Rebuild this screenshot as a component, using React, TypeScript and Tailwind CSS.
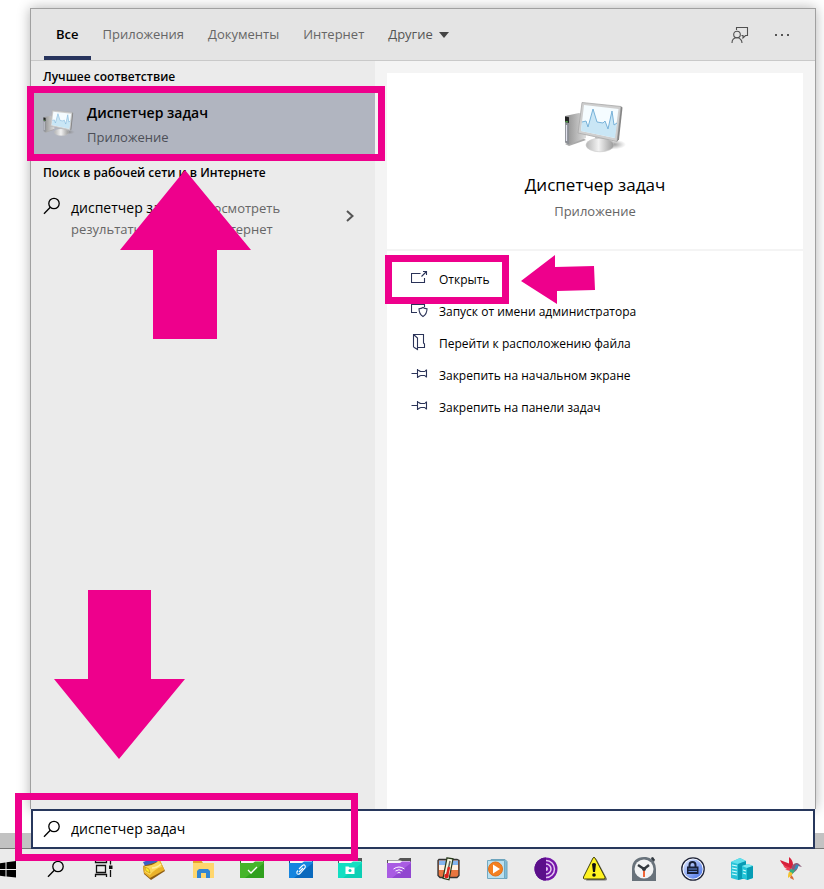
import React from 'react';

interface IconProps {
  className?: string;
}

const SearchIcon: React.FC<IconProps> = ({ className }) => (
  <svg viewBox="0 0 18 18" className={className} fill="none" stroke="currentColor" strokeWidth="1.3">
    <circle cx="11" cy="6.5" r="5.2" />
    <path d="M7.3 10.2 1 16.8" />
  </svg>
);

const FeedbackIcon = () => (
  <svg viewBox="0 0 18 18" className="size-[18px]" fill="none" stroke="#505050" strokeWidth="1.1">
    <path d="M5.500 4V1.500h11v8h-2l-2.500 2.500V9.500h-1.500" />
    <circle cx="6" cy="8.500" r="3.300" />
    <path d="M1 17c0-3 2-5.200 5-5.200s5 2.200 5 5.200" />
  </svg>
);

const MonitorIcon: React.FC<IconProps> = ({ className }) => (
  <svg viewBox="0 0 62 52" className={className} aria-hidden="true">
    <defs>
      <linearGradient id="tower" x1="0" x2="1">
        <stop offset="0" stopColor="#8b8b8b" />
        <stop offset="1" stopColor="#dedede" />
      </linearGradient>
      <linearGradient id="stand" x1="0" x2="1">
        <stop offset="0" stopColor="#b5b5b5" />
        <stop offset=".45" stopColor="#f2f2f2" />
        <stop offset="1" stopColor="#989898" />
      </linearGradient>
      <radialGradient id="shade">
        <stop offset="0" stopColor="#777" stopOpacity=".8" />
        <stop offset="1" stopColor="#999" stopOpacity="0" />
      </radialGradient>
    </defs>
    <ellipse cx="49" cy="43.500" rx="13" ry="5" fill="url(#shade)" />
    <path d="M1 43 5 45l17-6-5-3z" fill="#aaa" />
    <path d="m1 15 14-3 7 2v23L5 43.500z" fill="url(#tower)" />
    <path d="m1 15 4 1v27.500l-4-2z" fill="#8c8f95" />
    <path d="m1 15.500 4 .8V22l-4-1z" fill="#222" />
    <path d="M2.500 24v16" stroke="#e2e2ee" strokeWidth="1.200" />
    <path d="M1.500 20.500 4 21" stroke="#5dc151" strokeWidth="1.200" />
    <path d="m31 36 14 2-1 6H33z" fill="#b8b8b8" />
    <ellipse cx="36" cy="44" rx="14" ry="6.800" fill="url(#stand)" stroke="#c7c7c7" strokeWidth=".6" />
    <path d="m18 1.500 39 4-4 35-39-8.500z" fill="#cfcfcf" stroke="#a8a8a8" strokeWidth=".8" />
    <path d="m57 5.500 1.500 1L55 38.500l-2 2z" fill="#858585" />
    <path d="m20 4 34.500 4-4 29L17 30z" fill="#f5fcff" />
    <path d="m18 21 4-1 2 6 5-18 4 13 6 1 2-2 3 8 4-18 2 14 3-2-2 15-34-7z" fill="#c9e6f5" />
    <path d="m18 21 4-1 2 6 5-18 4 13 6 1 2-2 3 8 4-18 2 14 3-2" fill="none" stroke="#78b2d9" strokeWidth="1" />
  </svg>
);

const OpenIcon = () => (
  <svg viewBox="0 0 18 18" className="size-[18px]" fill="none" stroke="#2a3358" strokeWidth="1.1">
    <path d="M9.500 4.500h-9v9h13V9M10.500 7.500l5-5M12 2.500h3.500V6" />
  </svg>
);

const AdminIcon = () => (
  <svg viewBox="0 0 18 18" className="size-[18px]" fill="none" stroke="#2a3358" strokeWidth="1.1">
    <path d="M6 11.500H.5v-8h13V6" />
    <path d="M12 6.500c1.500 1 2.500 1.200 4 1.300 0 4-1 6-4 7.700-3-1.700-4-3.700-4-7.700 1.500-.1 2.500-.3 4-1.300z" />
  </svg>
);

const FileLocationIcon = () => (
  <svg viewBox="0 0 18 18" className="size-[18px]" fill="none" stroke="#2a3358" strokeWidth="1.1">
    <path d="M2.500 14V1.500h10V10l1 1v3.500H7M2.500 1.500 6.500 5v11.500L2.500 14" />
  </svg>
);

const PinIcon = () => (
  <svg viewBox="0 0 18 18" className="size-[18px]" fill="none" stroke="#2a3358" strokeWidth="1.1">
    <path d="M.5 8.500h6M6.500 4v9M6.500 5c1.500 0 2 1.500 3.500 1.500h3.500c1 0 1-1.500 2-1.500M6.500 12c1.500 0 2-1.500 3.500-1.500h3.500c1 0 1 1.500 2 1.500M15.500 4.500v8" />
  </svg>
);

const WindowsIcon = () => (
  <svg viewBox="0 0 24 24" className="size-6">
    <path d="m4 6.500 6.500-1V12H4zM11.500 5.300 21 4v8h-9.500zM4 13h6.500v6.500l-6.500-1zM11.500 13H21v7.500l-9.500-1z" />
  </svg>
);

const TaskViewIcon = () => (
  <svg viewBox="0 0 24 24" className="size-6" fill="none" stroke="#111" strokeWidth="1.3">
    <path d="M2.500 3v2.500h11V3M3.500 8.500h9v7h-9zM2.500 20v-2.500h11V20M17.500 3v4.500M17.500 13v7" />
    <path d="M16 8.500h3.500V12H16z" fill="#111" stroke="none" />
  </svg>
);

const WalletIcon = () => (
  <svg viewBox="0 0 24 24" className="size-6">
    <path d="m1 5 11-4 4 4-12 6z" fill="#3c61c4" />
    <path d="m1 9 17-5 5 10-14 9-7-6z" fill="#8d5d14" />
    <path d="M1 9c5 1 12-2 17-6l4.500 10L8 21l-6-5z" fill="#eab22a" />
    <path d="M3 9c6 0 10-2 14-5l3 6c-5 1-9 4-12 8l-5-3z" fill="#fbd75a" />
    <path d="m3 10 4 2 1 4-4-2z" fill="#ffe928" stroke="#b98b0d" strokeWidth=".6" />
    <path d="M10 11c4 0 7-2 9-4" fill="none" stroke="#fff0a5" strokeWidth="1.500" />
  </svg>
);

const ExplorerIcon = () => (
  <svg viewBox="0 0 24 24" className="size-6">
    <path d="M2 3h8l2 3h10v15H2z" fill="#e7a52b" />
    <path d="M2 6h21v15H2z" fill="#ffd66d" />
    <path d="M6 21v-7l2-2h9l2 2v7h-4v-5h-5v5z" fill="#3386d2" />
  </svg>
);

interface FolderProps {
  back: string;
  front: string;
  shade: string;
  children: React.ReactNode;
}

const FolderIcon: React.FC<FolderProps> = ({ back, front, shade, children }) => (
  <svg viewBox="0 0 24 24" className="size-6">
    <path d="M0 3h11l2-2h11v7H0z" fill={back} />
    <path d="M1 3.500h12l2 .5h8v3H1z" fill="#f7f7f7" />
    <path d="M0 6h13l2-1.500h9V21H0z" fill={front} />
    <path d="M24 6v15H5z" fill={shade} />
    {children}
  </svg>
);

const CleanerIcon = () => (
  <svg viewBox="0 0 24 24" className="size-6">
    <path d="M3 2.500h8v18H4l-2-2v-15zM13 2.500h8l2 1v15l-2 2h-8z" fill="#e8753f" stroke="#333" strokeWidth="1.300" />
    <path d="M3 3.500h7v7H3zM14 3.500h8v7h-8z" fill="#84b6ef" />
    <path d="M3 8h7v5H3zM14 8h8v5h-8z" fill="#fff0e1" />
    <path d="m11 .8 6 1-4 21-6-1.500z" fill="#f3f7df" stroke="#27391c" strokeWidth="1.200" />
    <path d="m14 4-3 14" stroke="#666" strokeWidth="1.500" />
    <path d="m13 10-2 9" stroke="#e02820" strokeWidth="2.500" />
    <circle cx="10.500" cy="19" r="2.300" fill="#d9201b" />
  </svg>
);

const PlayerIcon = () => (
  <svg viewBox="0 0 24 24" className="size-6">
    <path d="M6 2.500h14l2 2v17H7z" fill="#82bdd9" stroke="#6da4bd" />
    <path d="M2.500 3.500h17v18h-17z" fill="#b9e0f0" stroke="#72a9c2" />
    <circle cx="10.500" cy="12" r="7" fill="#f48021" stroke="#e0701a" />
    <path d="m8 7.500 7 4.500-7 4.500z" fill="#fff" />
  </svg>
);

const TorIcon = () => (
  <svg viewBox="0 0 24 24" className="size-6" fill="none">
    <circle cx="12" cy="12" r="11.500" fill="#7416a8" />
    <path d="M12 .5a11.500 11.500 0 0 0 0 23z" fill="#5b0f8a" />
    <path d="M12 3.500a8.500 8.500 0 0 1 0 17M12 7a5 5 0 0 1 0 10" stroke="#e4c7f2" strokeWidth="1.500" />
    <path d="M12 10a2 2 0 0 1 0 4z" fill="#e4c7f2" />
  </svg>
);

const WarningIcon = () => (
  <svg viewBox="0 0 24 24" className="size-6">
    <path d="M13.500 2 24 22q0 1.500-2 1.500H3z" fill="#777" />
    <path d="M10 1q1-1.500 2 0L22 20q.5 2-1 2H1.500Q0 22 .5 20z" fill="#fff321" stroke="#41400d" strokeWidth="1" />
    <path d="M9 7q2-2 4 0l-1 8h-2z" fill="#111" />
    <circle cx="11" cy="18" r="1.800" fill="#111" />
  </svg>
);

const ClockIcon = () => (
  <svg viewBox="0 0 24 24" className="size-6">
    <path d="M0 24V12C0 4 5 0 12 0c3 0 5 .5 7 2l1-2 3 3-1 2q2 3 2 7v12z" fill="#68727b" />
    <path d="m19 1 2-1 2 3-2 1z" fill="#343a40" />
    <circle cx="12" cy="12" r="9.500" fill="#f2f3f4" />
    <path d="m6 8 6 4 5-4" fill="none" stroke="#343a40" strokeWidth="2.500" />
    <path d="M12 12v8" stroke="#ef6537" strokeWidth="2" />
    <circle cx="12" cy="12" r="2" fill="#343a40" />
  </svg>
);

const LockIcon = () => (
  <svg viewBox="0 0 24 24" className="size-6">
    <defs>
      <linearGradient id="lock" x1="0" y1="0" x2="1" y2="1">
        <stop offset="0" stopColor="#dfe8ff" />
        <stop offset="1" stopColor="#426ee7" />
      </linearGradient>
    </defs>
    <circle cx="12" cy="12" r="11.200" fill="#fff" stroke="#20253a" strokeWidth="1.300" />
    <circle cx="12" cy="12" r="9.700" fill="url(#lock)" />
    <path d="M8.500 10V8a3 3 0 0 1 6 0v2" fill="none" stroke="#182039" strokeWidth="2" />
    <path d="M6 9.500h11.500V17H6z" fill="#182039" />
    <path d="M7.500 12h8.500M7.500 14.500h8.500" stroke="#6589d8" strokeWidth="1" />
  </svg>
);

const ServersIcon = () => (
  <svg viewBox="0 0 24 24" className="size-6">
    <path d="m1 5 9-4 6 3v17l-8 2-7-2z" fill="#2cc3d8" />
    <path d="m1 5 9-4 6 3-8 3z" fill="#62e0ec" />
    <path d="M8 7v16l8-2V4z" fill="#089bb4" />
    <path d="m2 8 5 1M2 11l5 1M2 14l5 1M2 17l5 1" stroke="#d7ffff" strokeWidth="1.200" />
    <path d="m12 9 6-2 5 2v12l-6 2-5-2z" fill="#24c5d8" />
    <path d="m12 9 6-2 5 2-6 2z" fill="#7be9f2" />
    <path d="m17 11 6-2v12l-6 2z" fill="#079db5" />
    <path d="m13 13 3 1M13 16l3 1" stroke="#d7ffff" strokeWidth="1.200" />
  </svg>
);

const BirdIcon = () => (
  <svg viewBox="0 0 24 24" className="size-6">
    <path d="m1 3 9 3.500L10 0c3 2 4 5 4 8l-2 5C8 11 3 8 1 3z" fill="#d81f3a" />
    <path d="m4 8 8 3-1 3c-2-1-3-1-5-1l2-1c-2-1-3-2-4-4z" fill="#ed4055" />
    <path d="M13 9c2-3 5-4 7-2l3 3-4-1c0 3-2 5-5 7l-2-2z" fill="#8a5a78" />
    <path d="M17 7.500 20 8l-2 4-3 1z" fill="#348eb9" />
    <path d="m11 12 5 1c-1 3-3 5-6 6z" fill="#35ae82" />
    <path d="M10 15c3 0 4 1 3 3l-4 3c0-2 0-4 1-6z" fill="#f2c22c" />
    <path d="m12 18 2 2 1 3-4-2z" fill="#d96a36" />
  </svg>
);

const tabs = ['Все', 'Приложения', 'Документы', 'Интернет'];

const actions = [
  { label: 'Открыть', icon: <OpenIcon /> },
  { label: 'Запуск от имени администратора', icon: <AdminIcon /> },
  { label: 'Перейти к расположению файла', icon: <FileLocationIcon /> },
  { label: 'Закрепить на начальном экране', icon: <PinIcon /> },
  { label: 'Закрепить на панели задач', icon: <PinIcon /> },
];

const taskbarItems = [
  { label: 'Пуск', icon: <WindowsIcon /> },
  { label: 'Поиск', icon: <SearchIcon className="size-[18px]" /> },
  { label: 'Представление задач', icon: <TaskViewIcon /> },
  { label: 'Кошелёк', icon: <WalletIcon /> },
  { label: 'Проводник', icon: <ExplorerIcon /> },
  {
    label: 'Задачи',
    icon: (
      <FolderIcon back="#238018" front="#46b52b" shade="#30a01e">
        <path d="m8 13 3 3 6-6" fill="none" stroke="#fff" strokeWidth="1.300" />
      </FolderIcon>
    ),
  },
  {
    label: 'Вложения',
    icon: (
      <FolderIcon back="#124c89" front="#1685df" shade="#0a69bd">
        <path d="m10 12 3-3q2-2 3-.5t-.5 3L11 16.500q-2 1.500-3 0-.8-1.500 1-3M10 15l4-4" fill="none" stroke="#fff" strokeWidth="1.100" />
      </FolderIcon>
    ),
  },
  {
    label: 'Камера',
    icon: (
      <FolderIcon back="#555" front="#12dfc2" shade="#0bcfb4">
        <path d="M7.500 9.500h3l1 1h5V17h-9z" fill="#fff" />
        <circle cx="12" cy="13.500" r="1.500" fill="#0bcfb4" />
      </FolderIcon>
    ),
  },
  {
    label: 'Сеть',
    icon: (
      <FolderIcon back="#555" front="#a95ce3" shade="#9147d0">
        <path d="M6.500 12q5.500-4 11 0M8.500 14q3.500-2.500 7 0M10.500 16q1.500-1 3 0" fill="none" stroke="#fff" strokeWidth="1" />
      </FolderIcon>
    ),
  },
  { label: 'Очистка', icon: <CleanerIcon /> },
  { label: 'Проигрыватель', icon: <PlayerIcon /> },
  { label: 'Браузер', icon: <TorIcon /> },
  { label: 'Предупреждения', icon: <WarningIcon /> },
  { label: 'Будильники', icon: <ClockIcon /> },
  { label: 'Пароли', icon: <LockIcon /> },
  { label: 'Серверы', icon: <ServersIcon /> },
  { label: 'Колибри', icon: <BirdIcon /> },
];

const Header = () => (
  <header className="flex h-[52px] items-stretch justify-between border-b border-[#c9c9c9] bg-[#e4e4e4] pl-[13px] pr-6">
    <nav className="flex">
      {tabs.map((tab, i) => (
        <button
          key={tab}
          className={
            i === 0
              ? 'border-b-4 border-[#27345d] px-3 pt-1 font-semibold text-black'
              : 'border-b-4 border-transparent px-3 pt-1 text-[#666]'
          }
        >
          {tab}
        </button>
      ))}
      <button className="flex items-center gap-1.5 px-3 text-[#555]">
        Другие
        <svg viewBox="0 0 10 6" className="h-1.5 w-2.5" fill="#444">
          <path d="M0 0h10L5 6z" />
        </svg>
      </button>
    </nav>
    <div className="flex items-center gap-6 text-[#444]">
      <button aria-label="Отзыв"><FeedbackIcon /></button>
      <button aria-label="Параметры">
        <svg viewBox="0 0 18 18" className="size-[18px]" fill="#555">
          <path d="M2 8h2v2H2zM8 8h2v2H8zM14 8h2v2h-2z" />
        </svg>
      </button>
    </div>
  </header>
);

const Results = () => (
  <section className="w-[344px] shrink-0 bg-[#ebebeb]">
    <h2 className="h-8 pl-3 text-xs font-semibold leading-8">Лучшее соответствие</h2>
    <button className="flex h-[61px] w-full items-center gap-3 bg-[#b1b5c0] pl-3 pt-0.5 text-left">
      <MonitorIcon className="mb-1 h-7 w-8" />
      <span className="flex flex-col">
        <span className="text-sm font-semibold leading-6">Диспетчер задач</span>
        <span className="leading-6 text-[#4c4f57]">Приложение</span>
      </span>
    </button>
    <h2 className="h-[38px] pl-3 text-xs font-semibold leading-[38px]">Поиск в рабочей сети и в Интернете</h2>
    <button className="flex w-full items-start pl-3 pr-5 pt-[5px] text-left">
      <SearchIcon className="mr-2.5 size-[18px] shrink-0" />
      <span className="leading-[21px] text-[#666]">
        <span className="text-sm leading-[21px] text-black">диспетчер задач</span> - Просмотреть
        <br />
        результаты в сети и в Интернет
      </span>
      <svg viewBox="0 0 10 14" className="ml-auto mt-3 h-3.5 w-2.5" fill="none" stroke="#555" strokeWidth="2">
        <path d="m2 2 5.500 5L2 12" />
      </svg>
    </button>
  </section>
);

const Details = () => (
  <section className="flex min-w-0 flex-1 flex-col bg-[#f4f4f4] px-3 pt-3">
    <div className="flex h-44 flex-col items-center bg-white pt-7">
      <MonitorIcon className="h-[52px] w-[62px]" />
      <h1 className="mt-[18px] text-[17px] leading-7">Диспетчер задач</h1>
      <p className="leading-6 text-[#666]">Приложение</p>
    </div>
    <ul className="mt-0.5 flex-1 bg-white pt-[13px]">
      {actions.map(({ label, icon }) => (
        <li key={label}>
          <button className="flex h-8 w-full items-center gap-2.5 pl-6 text-left text-xs">
            <span className="pb-1">{icon}</span>
            {label}
          </button>
        </li>
      ))}
    </ul>
  </section>
);

const Highlights = () => (
  <div className="pointer-events-none absolute inset-0 overflow-hidden" aria-hidden="true">
    <div className="absolute left-[27px] top-[86px] h-[75px] w-[358px] border-7 border-[#ee008c]" />
    <div className="absolute left-[385px] top-[255px] h-[49px] w-[124px] border-7 border-[#ee008c]" />
    <div className="absolute bottom-7 left-[15px] h-[68px] w-[343px] border-7 border-[#ee008c]" />
    <svg viewBox="0 0 131 169" className="absolute left-[120px] top-[170px] h-[169px] w-[131px]" fill="#ee008c">
      <path d="M65 0 131 80H97v89H33V80H0z" />
    </svg>
    <svg viewBox="0 0 75 50" className="absolute left-[521px] top-[255px] h-[50px] w-[75px]" fill="#ee008c">
      <path d="M0 26 34 0v12l39-1 1 24-38 1v13z" />
    </svg>
    <svg viewBox="0 0 131 169" className="absolute bottom-[130px] left-[54px] h-[169px] w-[131px]" fill="#ee008c">
      <path d="M34 0h63v89h34l-66 80L0 89h34z" />
    </svg>
  </div>
);

export default function App() {
  return (
    <div className="relative flex min-h-screen flex-col overflow-hidden bg-white font-['Open_Sans','Noto_Sans',sans-serif] text-[13px] text-black">
      <div className="flex flex-1 flex-col pl-[30px] pr-2 pt-2">
        <main className="flex flex-1 flex-col border border-b-0 border-[#a0a0a0] shadow-[0_0_12px_rgba(0,0,0,0.3)]">
          <Header />
          <div className="flex flex-1">
            <Results />
            <Details />
          </div>
        </main>
      </div>
      <div className="relative flex items-end">
        <div className="h-4 w-[31px] border-b border-[#777] bg-[#c2c2c2]" />
        <label className="flex h-10 flex-1 items-center gap-2.5 border-2 border-[#27375c] bg-white pl-2.5">
          <SearchIcon className="size-[18px] shrink-0" />
          <input
            aria-label="Поиск"
            defaultValue="диспетчер задач"
            className="min-w-0 flex-1 bg-transparent text-sm outline-none"
          />
        </label>
        <div className="h-4 w-[9px] border-b border-[#777] bg-[#c2c2c2]" />
      </div>
      <footer className="relative -ml-[18px] flex h-10 overflow-hidden bg-[#ebebeb]">
        {taskbarItems.map(({ label, icon }) => (
          <button key={label} aria-label={label} className="flex w-[49px] shrink-0 items-center justify-center">
            {icon}
          </button>
        ))}
      </footer>
      <Highlights />
    </div>
  );
}
